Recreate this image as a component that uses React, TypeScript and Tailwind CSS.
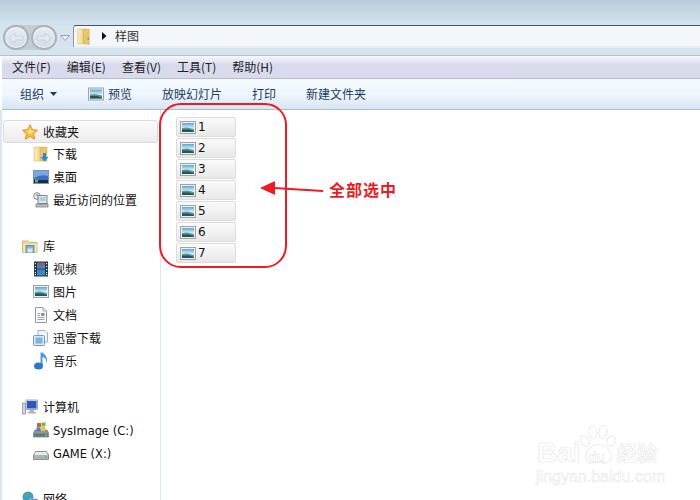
const cjk = "font-['Noto_Sans_CJK_SC','Noto_Sans',sans-serif]"

// --- little explorer icons ---
function PictureIcon({ className = 'w-4 h-[13px]' }: { className?: string }) {
  return (
    <svg className={className} viewBox="0 0 16 13">
      <rect x="0.5" y="0.5" width="15" height="12" fill="#efefef" stroke="#a2a2a2" />
      <defs>
        <linearGradient id="sky" x1="0" y1="0" x2="0" y2="1">
          <stop offset="0" stopColor="#58a6da" />
          <stop offset="0.6" stopColor="#e6f4fa" />
        </linearGradient>
      </defs>
      <rect x="2" y="2" width="12" height="9" fill="url(#sky)" />
      <path d="M2 7 L7 6.5 L14 8 V11 H2Z" fill="#5f9a7c" />
      <path d="M2 8.5 L9 8.5 L14 10 V11 H2Z" fill="#1f5568" />
    </svg>
  )
}

function FolderTall({ down, className = 'w-4 h-4' }: { down?: boolean; className?: string }) {
  return (
    <svg className={className} viewBox="0 0 16 16" preserveAspectRatio="none">
      <defs>
        <linearGradient id="fold" x1="0" y1="0" x2="1" y2="0">
          <stop offset="0" stopColor="#fbeeb4" />
          <stop offset="1" stopColor="#eccd72" />
        </linearGradient>
      </defs>
      <path d="M1 1 H11 V15 H1Z" fill="url(#fold)" stroke="#d6bb74" strokeWidth="0.6" />
      <path d="M7 2 L14 1 V15.5 L7 14Z" fill="#ecc665" stroke="#c4a452" strokeWidth="0.5" />
      {down ? (
        <path d="M10 7 H13 V11 H15.5 L11.5 15.5 L7.5 11 H10Z" fill="#2f86d6" />
      ) : (
        <rect x="12" y="9" width="1.5" height="2" fill="#4b8fc9" />
      )}
    </svg>
  )
}

function DesktopIcon() {
  return (
    <svg className="w-4 h-4" viewBox="0 0 16 16">
      <rect x="0.5" y="1.5" width="15" height="13" fill="#3d6fc0" stroke="#8194ad" />
      <path d="M1 2 H15 V7 Q8 5 1 9Z" fill="#7aa7e2" />
      <rect x="1" y="11" width="14" height="3" fill="#1d2b3f" />
      <rect x="2" y="10.5" width="3" height="3" fill="#63b04f" />
    </svg>
  )
}

function RecentIcon() {
  return (
    <svg className="w-4 h-4" viewBox="0 0 16 16">
      <circle cx="4" cy="4" r="3.3" fill="#eee" stroke="#888" />
      <path d="M4 2 V4 H6" stroke="#666" fill="none" strokeWidth="0.8" />
      <rect x="5" y="3.5" width="9" height="8" fill="#dfe7ea" stroke="#7b8a8e" />
      <rect x="6.5" y="5" width="6" height="4" fill="#a9d0e5" />
      <rect x="3" y="12" width="12" height="3" fill="#b9c0c2" stroke="#707a7c" strokeWidth="0.7" />
    </svg>
  )
}

function StarIcon() {
  return (
    <svg className="w-4 h-4" viewBox="0 0 16 16">
      <path
        d="M8 0.7 L10.2 5.6 L15.5 6.2 L11.6 9.8 L12.7 15.2 L8 12.5 L3.3 15.2 L4.4 9.8 L0.5 6.2 L5.8 5.6Z"
        fill="#fbbf3c"
        stroke="#dd7f2a"
        strokeWidth="0.8"
      />
      <path d="M8 3 L9.4 6.6 L12.5 7 L8 10 L4.5 7.5 L6.8 6.5Z" fill="#fde27f" />
    </svg>
  )
}

function LibraryIcon() {
  return (
    <svg className="w-4 h-4" viewBox="0 0 16 16">
      <path d="M0.5 3 H6 L7.5 4.5 H15 V14.5 H0.5Z" fill="#f3d98b" stroke="#c2a258" strokeWidth="0.7" />
      <path d="M1 6 H15 L14.5 14.5 H1.5Z" fill="#f7e5ad" />
      <rect x="4" y="7.5" width="8" height="7" fill="#7fb3d6" stroke="#3f7ca6" strokeWidth="0.7" />
      <rect x="5.5" y="10.5" width="5" height="4" fill="#d8ebf5" />
    </svg>
  )
}

function VideoIcon() {
  return (
    <svg className="w-4 h-4" viewBox="0 0 16 16">
      <rect x="1" y="0.5" width="14" height="15" fill="#1d3a44" />
      <rect x="4" y="1.5" width="8" height="6" fill="#8a5f78" />
      <rect x="4" y="8.5" width="8" height="6" fill="#3e86c6" />
      <path d="M4 3 L8 6 L12 3 V7.5 H4Z" fill="#3e86c6" />
      {[2, 5, 8, 11, 13].map(y => (
        <g key={y}>
          <rect x="1.8" y={y} width="1.2" height="1.2" fill="#cfe3e6" />
          <rect x="13" y={y} width="1.2" height="1.2" fill="#cfe3e6" />
        </g>
      ))}
    </svg>
  )
}

function DocIcon() {
  return (
    <svg className="w-4 h-4" viewBox="0 0 16 16">
      <path d="M2.5 0.5 H10 L13.5 4 V15.5 H2.5Z" fill="#fcfcfc" stroke="#8f99a3" />
      <path d="M10 0.5 V4 H13.5" fill="#dfe5ea" stroke="#8f99a3" strokeWidth="0.7" />
      <rect x="8" y="6" width="3.5" height="3" fill="#6b98bf" />
      <path d="M4.5 6.5 H7 M4.5 8.5 H7 M4.5 10.5 H11.5 M4.5 12.5 H11.5" stroke="#9aa3ab" />
    </svg>
  )
}

function ThunderIcon() {
  return (
    <svg className="w-4 h-4" viewBox="0 0 16 16">
      <path d="M5 0.5 H12 L14.5 3 V12 H5Z" fill="#f2f5f8" stroke="#9fb0bf" />
      <rect x="0.5" y="5.5" width="11" height="10" rx="1" fill="#dbe9f5" stroke="#6f9cc2" />
      <rect x="2.5" y="7.5" width="7" height="6" fill="#7fb2dc" />
    </svg>
  )
}

function MusicIcon() {
  return (
    <svg className="w-4 h-[18px]" viewBox="0 0 16 18">
      <path d="M7.5 0.5 V13 L9.5 13 V5 Q14 6 13 12 Q16 5 9.5 0.5Z" fill="#4d9bdb" />
      <ellipse cx="5.5" cy="14" rx="4.5" ry="3.6" fill="#2b7cc6" />
    </svg>
  )
}

function ComputerIcon() {
  return (
    <svg className="w-4 h-4" viewBox="0 0 16 16">
      <rect x="0.5" y="4" width="3" height="11" fill="#cfd5d8" stroke="#7f8a8e" strokeWidth="0.7" />
      <rect x="4" y="1" width="11.5" height="9.5" fill="#e6ebee" stroke="#7f8a8e" strokeWidth="0.7" />
      <rect x="5" y="2" width="9.5" height="7.5" fill="#2a55c8" />
      <path d="M7.5 11 H12 V13 H14 V14.5 H5.5 V13 H7.5Z" fill="#a9b3b8" />
    </svg>
  )
}

function SystemDriveIcon() {
  return (
    <svg className="w-4 h-4" viewBox="0 0 16 16">
      <path d="M2 8 H14 L15.5 11 V15 H0.5 V11Z" fill="#8f9ba1" stroke="#5c666b" strokeWidth="0.6" />
      <rect x="1" y="11.5" width="14" height="3" fill="#66767d" />
      <rect x="12" y="12.5" width="2" height="1.2" fill="#6fe05a" />
      <rect x="4" y="1" width="4" height="4" fill="#e5572e" />
      <rect x="8.5" y="0.5" width="4" height="4" fill="#7bb93a" />
      <rect x="3.5" y="5.3" width="4" height="4" fill="#3b86d9" />
      <rect x="8" y="5" width="4" height="4" fill="#f5c22e" />
    </svg>
  )
}

function DriveIcon() {
  return (
    <svg className="w-4 h-4" viewBox="0 0 16 16">
      <path d="M2.5 6.5 H13.5 L15.5 10 V14.5 H0.5 V10Z" fill="#e7eaec" stroke="#70797e" strokeWidth="0.8" />
      <rect x="1" y="10" width="14" height="4" fill="#aab3b7" />
      <rect x="12" y="11" width="2" height="2" fill="#6fc24a" />
    </svg>
  )
}

function NetworkIcon() {
  return (
    <svg className="w-4 h-4" viewBox="0 0 16 16">
      <circle cx="6" cy="6" r="5.5" fill="#3f9ad8" />
      <path d="M3 3 Q6 1 7 4 Q5 7 2 6Z M7 7 Q10 6 10 9 L7 11Z" fill="#5cb54a" />
      <rect x="8" y="8" width="7.5" height="6" fill="#2a55c8" stroke="#c7d0d6" strokeWidth="0.8" />
      <rect x="1" y="10" width="6" height="5" fill="#2a55c8" stroke="#c7d0d6" strokeWidth="0.8" />
    </svg>
  )
}

function NavButton({ flip }: { flip?: boolean }) {
  return (
    <div className="w-[26px] h-[25px] rounded-full border-2 border-[#aab1b8] bg-gradient-to-b from-[#e6edf3] to-[#d2dce6] flex items-center justify-center shadow-[inset_0_0_0_1px_#f0f4f7]">
      <svg className={`w-4 h-3 ${flip ? 'rotate-180' : ''}`} viewBox="0 0 16 12">
        <path d="M1 6 L7 1 V4 H15 V8 H7 V11Z" fill="#e3e9ef" stroke="#c4ccd4" strokeWidth="0.8" />
      </svg>
    </div>
  )
}

function NavRow({ icon, label, top, latin }: { icon: React.ReactNode; label: string; top?: boolean; latin?: boolean }) {
  return (
    <div className={`h-[23px] flex items-center ${top ? 'pl-[20px] gap-[5px]' : 'pl-[31px] gap-[4px]'}`}>
      {icon}
      <span className={latin ? "font-['DejaVu_Sans',sans-serif] text-[11.5px] pt-[4px]" : ''}>{label}</span>
    </div>
  )
}

const menus = ['文件(F)', '编辑(E)', '查看(V)', '工具(T)', '帮助(H)']
const files = ['1', '2', '3', '4', '5', '6', '7']

export default function App() {
  return (
    <div className={`relative w-[700px] h-[500px] overflow-hidden bg-white text-[12px] leading-none text-[#111] ${cjk}`}>
      {/* Title bar glass */}
      <div className="h-[25px] bg-gradient-to-b from-[#bacddc] to-[#d3e2ee]" />

      {/* Back/forward + address */}
      <div className="h-[31px] bg-[#d6e4f0] flex items-start border-b border-[#b4bcc4]">
        <div className="flex items-center pl-[3px]">
          <div className="flex items-center gap-[2px] rounded-full bg-[#c3ccd4]">
            <NavButton />
            <NavButton flip />
          </div>
          <svg className="w-[10px] h-[6px] ml-[3px]" viewBox="0 0 10 6">
            <path d="M0.5 0.5 H9.5 L5 5.5Z" fill="#e8eef3" stroke="#9aa4ad" />
          </svg>
        </div>
        <div className="ml-[3px] flex-1 h-[23px] rounded-tl-[3px] border-t border-l border-t-[#4d5660] border-l-[#8c96a0] bg-[#f3f7fb] border-b-2 border-b-[#e9edf1] flex items-center pl-[3px]">
          <FolderTall className="w-[14px] h-[17px]" />
          <svg className="w-[6px] h-[8px] ml-[10px]" viewBox="0 0 6 8">
            <path d="M1 0 L5.5 4 L1 8Z" fill="#111" />
          </svg>
          <span className="ml-[8px] text-[#333]">样图</span>
        </div>
      </div>

      {/* Menu bar */}
      <div className="ml-[2px] h-[23px] bg-gradient-to-b from-[#f8f9fc] via-[#d8daec] via-40% to-[#d9dcee] border-b border-[#b6bac9] flex items-center pl-[10px] gap-[16px]">
        {menus.map(m => (
          <span key={m} className="text-[#222]">{m}</span>
        ))}
      </div>

      {/* Command bar */}
      <div className="ml-[2px] h-[31px] bg-gradient-to-b from-[#f5fafe] via-[#eef7fd] via-50% to-[#d9e5f3] border-b border-[#a9bdd0] flex items-center pl-[18px] text-[#1e3a5f]">
        <span>组织</span>
        <svg className="w-[7px] h-[4px] ml-[6px]" viewBox="0 0 7 4">
          <path d="M0 0 H7 L3.5 4Z" fill="#1e3a5f" />
        </svg>
        <div className="ml-[31px]">
          <PictureIcon className="w-4 h-[14px]" />
        </div>
        <span className="ml-[4px]">预览</span>
        <span className="ml-[30px]">放映幻灯片</span>
        <span className="ml-[30px]">打印</span>
        <span className="ml-[30px]">新建文件夹</span>
      </div>

      {/* Body */}
      <div className="flex h-[390px]">
        <aside className="w-[161px] shrink-0 border-l-2 border-r border-[#d9e6f4] bg-white pt-[9px]">
          <div className="h-[23px] mt-[1px] ml-[1px] w-[155px] -mb-[1px] rounded-[3px] border border-[#dcdcdc] bg-gradient-to-b from-[#fbfbfb] to-[#ececec] flex items-center pl-[18px] gap-[5px]">
            <StarIcon />
            <span>收藏夹</span>
          </div>
          <NavRow icon={<FolderTall down />} label="下载" />
          <NavRow icon={<DesktopIcon />} label="桌面" />
          <NavRow icon={<RecentIcon />} label="最近访问的位置" />
          <div className="h-[23px]" />
          <NavRow top icon={<LibraryIcon />} label="库" />
          <NavRow icon={<VideoIcon />} label="视频" />
          <NavRow icon={<PictureIcon />} label="图片" />
          <NavRow icon={<DocIcon />} label="文档" />
          <NavRow icon={<ThunderIcon />} label="迅雷下载" />
          <NavRow icon={<MusicIcon />} label="音乐" />
          <div className="h-[23px]" />
          <NavRow top icon={<ComputerIcon />} label="计算机" />
          <NavRow latin icon={<SystemDriveIcon />} label="SysImage (C:)" />
          <NavRow latin icon={<DriveIcon />} label="GAME (X:)" />
          <div className="h-[23px]" />
          <NavRow top icon={<NetworkIcon />} label="网络" />
        </aside>

        <main className="flex-1 pl-[15px] pt-[7px] flex flex-col gap-[1px]">
          {files.map(f => (
            <div
              key={f}
              className="w-[60px] h-[20px] rounded-[2px] border border-[#dcdcdc] bg-gradient-to-b from-[#fafafa] to-[#e8e8e8] flex items-center pl-[3px] gap-[2px]"
            >
              <PictureIcon />
              <span className="font-['DejaVu_Sans',sans-serif] text-[12px] text-[#111]">{f}</span>
            </div>
          ))}
        </main>
      </div>

      {/* Red annotation over the screenshot */}
      <div className="absolute left-[159px] top-[103px] w-[128px] h-[165px] rounded-[22px] border-2 border-[#ed1c24]" />
      <svg className="absolute left-[258px] top-[178px] w-[70px] h-[22px]" viewBox="0 0 70 22">
        <path d="M2 10 L17 3 L17 17Z" fill="#ed1c24" />
        <path d="M16 10 L65 13" stroke="#ed1c24" strokeWidth="2" />
      </svg>
      <span className="absolute left-[329px] top-[181px] text-[16px] font-bold tracking-[1px] text-[#ed1c24]">全部选中</span>

      {/* Baidu watermark */}
      <div className="absolute left-[536px] top-[424px] w-[130px] h-[62px]">
        <svg className="absolute left-[42px] top-0 w-[40px] h-[41px]" viewBox="0 0 40 41" fill="#fff" stroke="#eaeaea" strokeWidth="1">
          <ellipse cx="7" cy="17" rx="4" ry="5.5" transform="rotate(-25 7 17)" />
          <ellipse cx="15" cy="8" rx="4" ry="6.5" transform="rotate(-8 15 8)" />
          <ellipse cx="25" cy="8" rx="4" ry="6.5" transform="rotate(8 25 8)" />
          <ellipse cx="33" cy="17" rx="4" ry="5.5" transform="rotate(25 33 17)" />
          <path d="M20 20 Q29 21 33 30 Q35 40 25 39 Q20 37 15 39 Q6 40 8 30 Q12 21 20 20Z" />
        </svg>
        <span className="absolute left-[1px] top-[15px] text-[28px] font-bold font-['Liberation_Sans',sans-serif] text-white [-webkit-text-stroke:0.7px_#e8e8e8]">Bai</span>
        <span className="absolute left-[52px] top-[26px] text-[14px] font-bold font-['Liberation_Sans',sans-serif] text-white [-webkit-text-stroke:0.6px_#e8e8e8]">du</span>
        <span className="absolute left-[81px] top-[19px] text-[20px] font-bold text-white [-webkit-text-stroke:0.7px_#e8e8e8]">经验</span>
        <span className="absolute left-0 top-[45px] text-[16px] font-['Liberation_Sans',sans-serif] text-white [-webkit-text-stroke:0.6px_#eaeaea]">jingyan.baidu.com</span>
      </div>
    </div>
  )
}
